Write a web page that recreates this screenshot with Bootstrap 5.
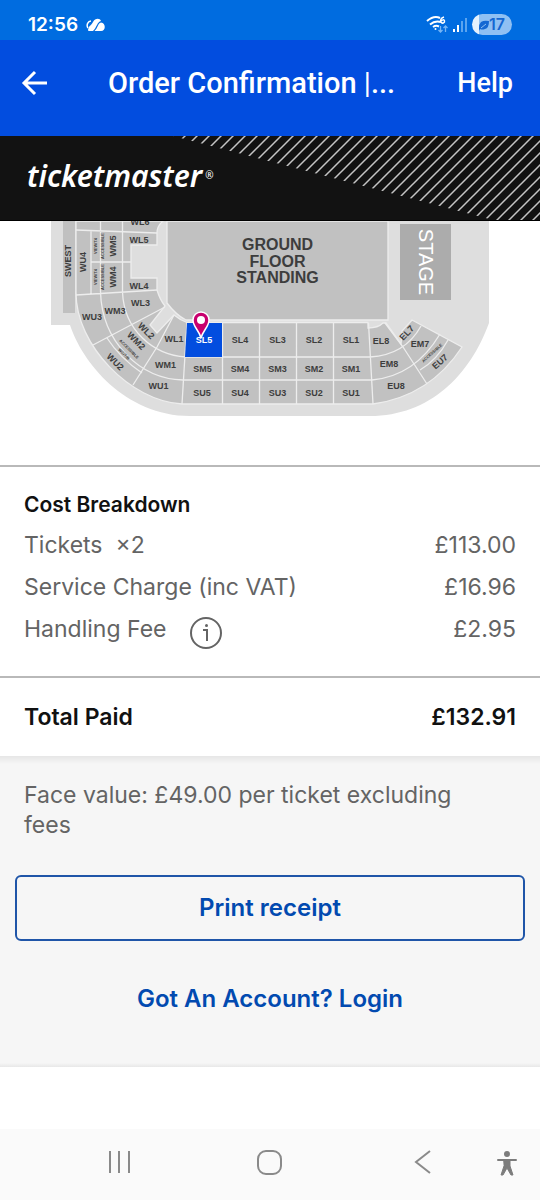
<!DOCTYPE html>
<html lang="en">
<head>
<meta charset="utf-8">
<meta name="viewport" content="width=device-width, initial-scale=1">
<title>Order Confirmation</title>
<link href="https://cdn.jsdelivr.net/npm/bootstrap@5.3.0/dist/css/bootstrap.min.css" rel="stylesheet">
<style>
  body { font-family: Inter, "Open Sans", sans-serif; color: #111; background: #fff; }
  .status-bar { height: 40px; padding: 10px 28px 0; background: #006ce0; }
  .clock { font-size: 19px; line-height: 30px; font-weight: 600; }
  .battery { width: 40px; height: 21px; border-radius: 11px; background: linear-gradient(90deg, #e4f1fd 17%, #8fc0f3 17%); color: #1467d2; font-size: 16px; line-height: 21px; font-weight: 600; padding-right: 7px; }
  .app-bar { height: 96px; padding: 0 27px 10px 20px; background: #024ddf; font-family: Roboto, sans-serif; }
  .app-bar h1 { font-size: 29px; line-height: 36px; font-weight: 500; padding-left: 60px; }
  .app-bar a { font-size: 27px; line-height: 36px; font-weight: 500; }
  .brand-strip { height: 85px; padding: 0 0 4px 27px; background: #121212; border-bottom: 1px solid #000; }
  .brand-name { font-family: "Noto Sans", sans-serif; font-size: 30px; line-height: 40px; font-weight: 600; font-style: italic; }
  .brand-name sup { font-size: 10px; top: -8px; font-weight: 400; font-style: normal; margin-left: 3px; }
  .seat-map { border-bottom: 2px solid #b9b9b9; }
  .seat-map text { font-family: "Liberation Sans", Arial, sans-serif; font-weight: 700; font-size: 9px; fill: #3d3d3d; text-anchor: middle; }
  .seat-map .floor { font-size: 16px; }
  .seat-map .tiny { font-size: 4px; }
  .seat-map .stage { font-size: 20px; font-weight: 400; fill: #fff; }
  .seat-map .picked { fill: #fff; }
  .costs { padding: 23px 24px 26px; border-bottom: 2px solid #b9b9b9; }
  .costs h2 { font-size: 21px; line-height: 30px; font-weight: 600; margin-bottom: 4px; }
  .costs th, .costs td, .face-value { font-size: 23px; color: #646464; font-weight: 400; }
  .costs th, .costs td { height: 42px; line-height: 30px; }
  .total { height: 78px; padding: 0 24px; font-size: 23px; font-weight: 600; }
  .receipt { background: linear-gradient(#e6e6e6, #f6f6f6 8px, #f6f6f6 calc(100% - 4px), #e8e8e8); padding: 24px 15px 53px; }
  .face-value { line-height: 30px; padding: 0 36px 0 9px; margin-bottom: 35px; }
  .print-btn { height: 66px; border: 2px solid #1f55a8; border-radius: 6px; color: #024ab0; font-size: 24px; font-weight: 600; }
  .login-link { color: #024ab0; font-size: 24px; line-height: 30px; font-weight: 600; margin-top: 43px; }
  .nav-keys { height: 71px; background: #fafafa; padding: 0 19px 5px 102px; }
</style>
</head>
<body class="d-flex flex-column min-vh-100">
<header>
  <div class="status-bar d-flex align-items-start text-white">
    <span class="clock">12:56</span>
    <svg class="ms-2 mt-2" width="20" height="14" viewBox="0 0 20 14" fill="#fff" aria-hidden="true"><path d="M2 10C0 7 2 3 5 3" fill="none" stroke="#fff" stroke-width="1.500"/><path d="M2 12C3 7 5 8 7 4C9 0 14 0 15 3C11 4 11 9 7 13H4C3 13 2 13 2 12Z"/><path d="M8.500 13C12 10 12 5 15 4.500C20 5 20 13 15 13Z"/></svg>
    <svg class="ms-auto" width="46" height="28" viewBox="425 10 46 28" fill="none" stroke="#fff" stroke-width="2" aria-label="Wi-Fi and signal"><path d="M426 21Q433 15 439 18M429 24.500Q434 20 440 22M432 27Q435 25 438 26.500"/><circle cx="434.500" cy="29" r="1" fill="#fff" stroke="none"/><path d="M443 17C440 18 439 20 440 22C441 24 444 23 443.500 21C443 19 441 20 440.500 21" stroke-width="1.500"/><path d="M439.500 26V32M437.500 30L439.500 32L441.500 30M444.500 32V26M442.500 28L444.500 26L446.500 28" stroke="#75b5f5" stroke-width="1.300"/><path d="M453 29V32M457 25V32"/><path d="M461 21V32M465 18V32" stroke="#5ba4ef"/></svg>
    <span class="battery d-flex align-items-center justify-content-end mt-1"><svg width="10" height="12" viewBox="0 0 10 12" fill="#1467d2" aria-hidden="true"><path d="M2 3Q5 1 10 2Q10 9 6 10Q3 11 1 10L0 12L0 9Q0 5 2 3Z"/><path d="M2 9L7 5" stroke="#8fc0f3"/></svg>17</span>
  </div>
  <nav class="app-bar d-flex align-items-center text-white" aria-label="App bar">
    <button class="btn p-0 border-0 text-white lh-1" type="button" aria-label="Back"><svg width="28" height="28" viewBox="0 0 28 28" fill="none" stroke="#fff" stroke-width="3"><path d="M27 14H5M15 3L4 14L15 25"/></svg></button>
    <h1 class="flex-grow-1 text-nowrap mb-0">Order Confirmation <span class="fw-normal">|</span>...</h1>
    <a href="#help" class="text-white text-decoration-none ms-3">Help</a>
  </nav>
  <div class="brand-strip d-flex align-items-center position-relative">
    <svg class="position-absolute top-0 end-0" width="370" height="84" viewBox="170 0 370 84" aria-hidden="true">
      <defs><pattern id="stripes" width="12" height="12" patternUnits="userSpaceOnUse" patternTransform="translate(5 0)"><path d="M-3 3L3-3M-1 13L13-1M9 15L15 9" stroke="#c4c4c4" stroke-width="1.500"/></pattern></defs>
      <path d="M173 0L493 84H540V0Z" fill="url(#stripes)"/>
    </svg>
    <a href="#home" class="brand-name position-relative text-white text-decoration-none">ticketmaster<sup>®</sup></a>
  </div>
</header>

<main class="flex-grow-1">
  <section class="seat-map" aria-label="Seat map">
    <svg class="d-block w-100" viewBox="0 221 540 244">
      <path d="M51 221V325H70C82 362 125 416 190 416H370C430 416 470 375 489 323V221Z" fill="#dedede"/>
      <path d="M63 221H75V313H63Z" fill="#c0c0c0"/>
      <g fill="#c1c1c1" stroke="#ededed" stroke-width="1.300">
        <path d="M76 221H163Q157 226 157 233V245H131V278H157V290Q160 300 165 306L150 325L157 333L174 315Q180 320 187 322.500H368V328Q378 328 383 323H386L401 344L402 331L412 320L462 347Q430 396 373 404H182C130 401 76 345 76 293Z"/>
        <path d="M167 221H388V320H186Q176 315 167 303Z"/>
        <path fill="none" d="M76 230L157 233M91 231V294M100.500 221V292C102 342 140 379 183 380H372Q415 376 440 334M122.500 221V292C124 330 153 355 186 357H370Q405 355 421 326M91 262H131M76 295L157 290M93 345L165 307M133 385L157 347L174 315M107 338Q120 358 142 373M420 370Q437 360 448 340M187 322L182 404M222.500 323V404M259.500 323V404M296.500 323V404M333.500 323V404M368.500 323L373 404M385 323L403 347L427 384"/>
      </g>
      <path d="M187 323H222V357H185Z" fill="#024ddf"/>
      <path d="M400 224H451V300H400Z" fill="#acacac"/>
      <text class="stage" transform="translate(419 262) rotate(90)">STAGE</text>
      <g>
        <text class="floor" x="277.500" y="250">GROUND</text><text class="floor" x="277.500" y="267">FLOOR</text><text class="floor" x="277.500" y="283">STANDING</text>
        <text transform="translate(71 261) rotate(-90)">SWEST</text><text transform="translate(86 262) rotate(-90)">WU4</text>
        <text transform="translate(116 246) rotate(-90)">WM5</text><text transform="translate(116 277) rotate(-90)">WM4</text>
        <text class="tiny" transform="translate(97 246) rotate(-90)">VIEW/T4</text><text class="tiny" transform="translate(97 277) rotate(-90)">VIEW/T4</text>
        <text class="tiny" transform="translate(104 246) rotate(-90)">ACCESSIBLE</text><text class="tiny" transform="translate(104 277) rotate(-90)">ACCESSIBLE</text>
        <text x="140" y="225">WL6</text><text x="139" y="242.500">WL5</text><text x="139" y="288.500">WL4</text><text x="140.500" y="306">WL3</text>
        <text x="115" y="314">WM3</text><text x="92" y="320">WU3</text>
        <text transform="translate(144 333) rotate(45)">WL2</text><text transform="translate(134 343) rotate(45)">WM2</text><text transform="translate(113 364) rotate(45)">WU2</text>
        <text class="tiny" transform="translate(128 350) rotate(45)">ACCESSIBLE</text><text class="tiny" transform="translate(123 355) rotate(45)">WC/T/B</text>
        <text x="174" y="342">WL1</text><text x="165.500" y="368">WM1</text><text x="158.500" y="389">WU1</text>
        <text class="picked" x="204" y="343">SL5</text><text x="240" y="343">SL4</text><text x="277.500" y="343">SL3</text><text x="314" y="343">SL2</text><text x="351" y="343">SL1</text>
        <text x="202.500" y="372">SM5</text><text x="240" y="372">SM4</text><text x="277.500" y="372">SM3</text><text x="314" y="372">SM2</text><text x="351" y="372">SM1</text>
        <text x="202" y="396">SU5</text><text x="240" y="396">SU4</text><text x="277.500" y="396">SU3</text><text x="314" y="396">SU2</text><text x="351" y="396">SU1</text>
        <text x="381" y="344">EL8</text><text x="389" y="367">EM8</text><text x="396" y="389">EU8</text>
        <text transform="translate(409 335) rotate(-47)">EL7</text><text x="420" y="347">EM7</text><text transform="translate(442 364) rotate(-42)">EU7</text>
        <text class="tiny" transform="translate(433 354) rotate(-42)">ACCESSIBLE</text>
      </g>
      <path d="M201 338C199 330 193 327 193 320A8 8 0 0 1 209 320C209 327 203 330 201 338Z" fill="#c8006e" stroke="#fff" stroke-width="1.500"/><circle cx="201" cy="320" r="4" fill="#fff"/>
    </svg>
  </section>

  <section class="costs">
    <h2 id="cost-title">Cost Breakdown</h2>
    <table class="w-100" aria-labelledby="cost-title">
      <tbody>
        <tr><th class="p-0" scope="row">Tickets &nbsp;×2</th><td class="p-0 text-end">£113.00</td></tr>
        <tr><th class="p-0" scope="row">Service Charge (inc VAT)</th><td class="p-0 text-end">£16.96</td></tr>
        <tr><th class="p-0" scope="row"><span class="d-flex align-items-center">Handling Fee
          <button class="btn p-0 border-0 ms-4 lh-1" type="button" aria-label="About the handling fee"><svg class="mt-2" width="32" height="32" viewBox="0 0 32 32" fill="none" stroke="#646464" stroke-width="2"><circle cx="16" cy="16" r="15"/><path d="M13 13H17V24"/><circle cx="16.500" cy="8.500" r="1.500" fill="#646464" stroke="none"/></svg></button></span></th><td class="p-0 text-end">£2.95</td></tr>
      </tbody>
    </table>
  </section>
  <div class="total d-flex align-items-center justify-content-between"><span>Total Paid</span><span>£132.91</span></div>

  <section class="receipt d-flex flex-column">
    <p class="face-value">Face value: £49.00 per ticket excluding fees</p>
    <button class="btn print-btn w-100" type="button">Print receipt</button>
    <a href="#login" class="login-link text-decoration-none align-self-center">Got An Account? Login</a>
  </section>
</main>

<footer class="nav-keys d-flex align-items-center justify-content-between">
  <button class="btn p-0 border-0 lh-1" type="button" aria-label="Recent apps"><svg width="34" height="28" viewBox="0 0 34 28" stroke="#8a8a8a" stroke-width="2"><path d="M8 3V25M17 3V25M27 3V25"/></svg></button>
  <button class="btn p-0 border-0 lh-1 me-2" type="button" aria-label="Home"><svg width="28" height="28" viewBox="0 0 28 28" fill="none" stroke="#8a8a8a" stroke-width="2"><rect x="3" y="3" width="23" height="23" rx="8"/></svg></button>
  <div class="d-flex align-items-center gap-5">
    <button class="btn p-0 border-0 lh-1 me-2" type="button" aria-label="Back"><svg width="28" height="28" viewBox="0 0 28 28" fill="none" stroke="#8a8a8a" stroke-width="2"><path d="M21 3L7 14L21 25"/></svg></button>
    <button class="btn p-0 border-0 lh-1" type="button" aria-label="Accessibility"><svg width="28" height="28" viewBox="0 0 28 28" fill="#7c7c7c" stroke="#7c7c7c" stroke-width="2" stroke-linecap="round" stroke-linejoin="round"><circle cx="14" cy="6" r="3" stroke="none"/><path d="M5 12H23"/><path d="M11 12H17L17 18L20 27H18L14 20L10 27H8L11 18Z" stroke-width="1"/></svg></button>
  </div>
</footer>
<script src="https://cdn.jsdelivr.net/npm/bootstrap@5.3.0/dist/js/bootstrap.bundle.min.js"></script>
</body>
</html>
